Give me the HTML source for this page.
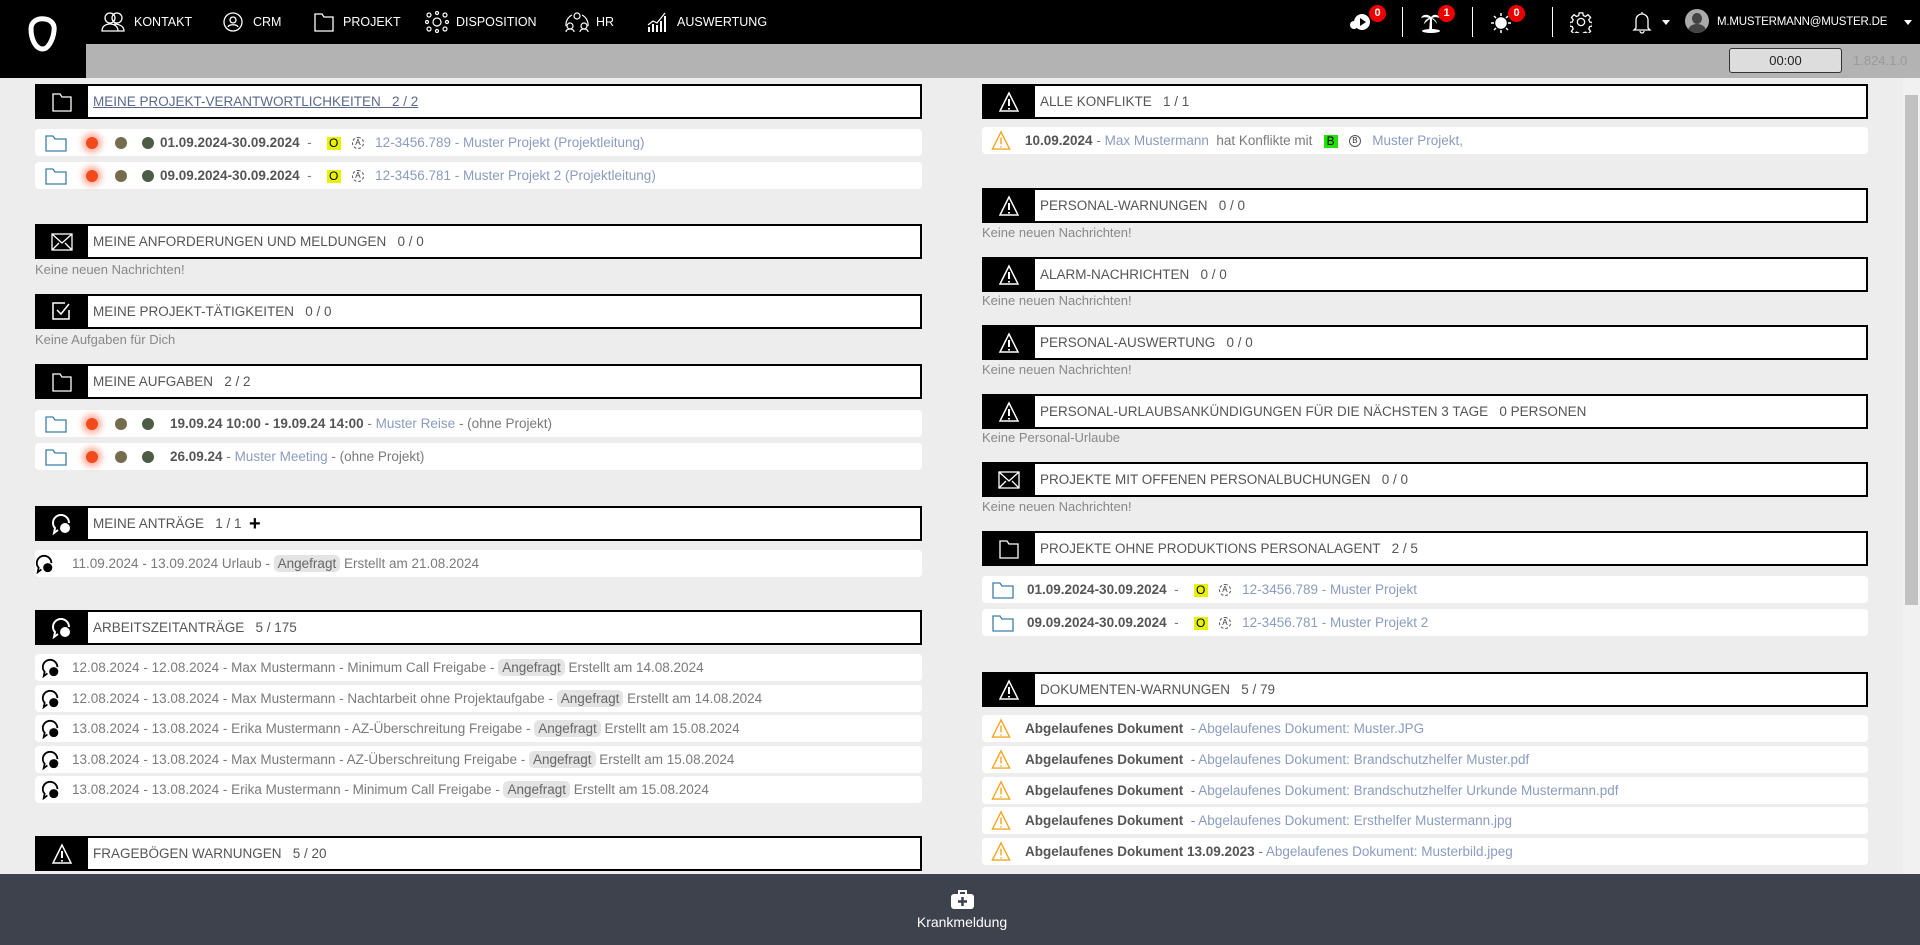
<!DOCTYPE html>
<html><head><meta charset="utf-8">
<style>
*{box-sizing:border-box;margin:0;padding:0}
body{width:1920px;height:945px;overflow:hidden;background:#ededed;font-family:"Liberation Sans",sans-serif;position:relative;color:#777}
.abs{position:absolute}
#top{left:0;top:0;width:1920px;height:44px;background:#000}
#gray{left:0;top:44px;width:1920px;height:34px;background:#b3b3b3}
#logo{left:0;top:0;width:86px;height:78px;background:#000}
.nav{position:absolute;top:0;height:44px;line-height:44px;color:#fff;font-size:12.5px}
.nav svg{position:absolute;top:11px}
.hdr{position:absolute;height:35px;border:2px solid #000;background:#fff;font-size:13.5px;color:#555;line-height:31px;padding-left:56px;white-space:nowrap}
.hdr .ib{position:absolute;left:0;top:-2px;width:51px;height:35px;background:#000}
.hdr .ib svg{position:absolute;left:14px;top:7px}
.row{position:absolute;height:27px;background:#fff;border-radius:4px;font-size:13.5px;line-height:27px;white-space:nowrap;color:#7a7a7a}
.msg{position:absolute;font-size:13px;color:#888}
.L{left:35px;width:887px}
.R{left:982px;width:886px}
b{color:#555}
.lnk{color:#8a9cc0}
.dot{position:absolute;top:8px;width:12px;height:12px;border-radius:50%}
.red{background:#f24a1c;box-shadow:0 0 6px 4px rgba(255,90,60,.45)}
.ol{background:#756c4e}
.gr{background:#4d5c45}
.yo{display:inline-block;background:#e6f200;color:#000;width:14px;height:13px;line-height:13px;text-align:center;font-size:12px;vertical-align:middle}
.ca{display:inline-block;width:12px;height:12px;border:1px dashed #555;border-radius:50%;font-size:8px;line-height:10px;text-align:center;color:#333;vertical-align:middle}
.tag{background:#e4e4e4;border-radius:5px;padding:1px 4px;color:#666}
.badge{position:absolute;top:5px;width:17px;height:17px;border-radius:50%;background:#e00;color:#fff;font-size:11px;font-weight:bold;text-align:center;line-height:17px}
.sep{position:absolute;top:7px;width:1px;height:30px;background:#fff}
</style></head><body>
<div id="top" class="abs"></div>
<div id="gray" class="abs"></div>
<div id="logo" class="abs">
<svg width="86" height="78" viewBox="0 0 86 78"><path d="M31 29c0-8 7-11 14-10 7 1 10 6 9 12-1 9-6 18-11 18-8 0-12-11-12-20z" fill="none" stroke="#fff" stroke-width="5"/></svg>
</div>
<div class="nav" style="left:100px"><svg width="28" height="22" viewBox="0 0 28 22" fill="none" stroke="#fff" stroke-width="1.3"><circle cx="10" cy="7" r="5"/><circle cx="17" cy="7" r="5"/><path d="M2 20c0-5 4-7 8-7s8 2 8 7zM14 13c5 0 10 2 10 7h-6"/></svg><span style="margin-left:34px">KONTAKT</span></div>
<div class="nav" style="left:222px"><svg width="22" height="22" viewBox="0 0 22 22" fill="none" stroke="#fff" stroke-width="1.3"><circle cx="11" cy="11" r="9"/><circle cx="11" cy="9" r="3"/><path d="M6 16c1-3 9-3 10 0"/></svg><span style="margin-left:31px">CRM</span></div>
<div class="nav" style="left:313px"><svg width="22" height="22" viewBox="0 0 22 22" fill="none" stroke="#fff" stroke-width="1.3"><path d="M2 3h7l2 3h9v14H2z"/></svg><span style="margin-left:30px">PROJEKT</span></div>
<div class="nav" style="left:425px"><svg width="24" height="22" viewBox="0 0 24 22" fill="none" stroke="#fff" stroke-width="1.2"><circle cx="12" cy="11" r="4"/><circle cx="4" cy="4" r="2"/><circle cx="20" cy="4" r="2"/><circle cx="4" cy="18" r="2"/><circle cx="20" cy="18" r="2"/><circle cx="12" cy="2" r="1.5"/><circle cx="2" cy="11" r="1.5"/><circle cx="22" cy="11" r="1.5"/><circle cx="12" cy="20" r="1.5"/></svg><span style="margin-left:31px">DISPOSITION</span></div>
<div class="nav" style="left:563px"><svg width="28" height="22" viewBox="0 0 28 22" fill="none" stroke="#fff" stroke-width="1.2"><circle cx="14" cy="5" r="3"/><circle cx="7" cy="15" r="3"/><circle cx="21" cy="15" r="3"/><path d="M3 15a11 11 0 0 1 6-11M25 15a11 11 0 0 0-6-11M3 21c0-2 2-3 4-3s4 1 4 3M17 21c0-2 2-3 4-3s4 1 4 3"/></svg><span style="margin-left:33px">HR</span></div>
<div class="nav" style="left:646px"><svg width="24" height="22" viewBox="0 0 24 22" fill="#fff"><rect x="2" y="16" width="2" height="5"/><rect x="6" y="13" width="2" height="8"/><rect x="10" y="14" width="2" height="7"/><rect x="14" y="10" width="2" height="11"/><rect x="18" y="5" width="2" height="16"/><path d="M2 14l5-4 4 2 8-10" stroke="#fff" fill="none" stroke-width="1.2"/></svg><span style="margin-left:31px">AUSWERTUNG</span></div>
<svg class="abs" style="left:1350px;top:13px" width="22" height="18" viewBox="0 0 22 18"><circle cx="12" cy="9" r="8" fill="#fff"/><circle cx="4" cy="12" r="4" fill="#fff"/><path d="M10 5l6 4-6 4z" fill="#000"/></svg>
<div class="badge" style="left:1369px">0</div>
<div class="sep" style="left:1402px"></div>
<svg class="abs" style="left:1420px;top:11px" width="22" height="22" viewBox="0 0 22 22" fill="#fff"><path d="M11 6c-4-4-9-2-10 1 3-1 6-1 8 0-3 1-5 4-5 6 2-2 4-4 6-5l-1 12h3l0-12c2 1 4 3 5 5 0-2-2-5-5-6 2-1 5-1 8 0-1-3-6-5-9-1z"/><ellipse cx="11" cy="20" rx="9" ry="2"/></svg>
<div class="badge" style="left:1438px">1</div>
<div class="sep" style="left:1472px"></div>
<svg class="abs" style="left:1490px;top:12px" width="22" height="22" viewBox="0 0 22 22" stroke="#fff" stroke-width="1.5"><circle cx="11" cy="11" r="5" fill="#fff"/><path d="M11 1v3M11 18v3M1 11h3M18 11h3M4 4l2 2M16 16l2 2M4 18l2-2M16 6l2-2"/></svg>
<div class="badge" style="left:1508px">0</div>
<div class="sep" style="left:1552px"></div>
<svg class="abs" style="left:1570px;top:11px" width="22" height="22" viewBox="0 0 24 24" fill="none" stroke="#fff" stroke-width="1.4"><circle cx="12" cy="12" r="4"/><path d="M10 2h4l.5 3 2.5 1 2.5-2 3 3-2 2.5 1 2.5 3 .5v4l-3 .5-1 2.5 2 2.5-3 3-2.5-2-2.5 1-.5 3h-4l-.5-3-2.5-1-2.5 2-3-3 2-2.5-1-2.5-3-.5v-4l3-.5 1-2.5-2-2.5 3-3 2.5 2 2.5-1z"/></svg>
<svg class="abs" style="left:1632px;top:10px" width="20" height="24" viewBox="0 0 20 24" fill="none" stroke="#fff" stroke-width="1.3"><path d="M10 2v2M4 18V10a6 6 0 0 1 12 0v8l2 2H2zM8 21a2 2 0 0 0 4 0"/></svg>
<div class="abs" style="left:1662px;top:20px;border:4px solid transparent;border-top:5px solid #fff"></div>
<div class="abs" style="left:1685px;top:9px;width:24px;height:24px;border-radius:50%;background:#aaa;overflow:hidden"><div style="position:absolute;left:7px;top:4px;width:10px;height:11px;border-radius:50%;background:#444"></div><div style="position:absolute;left:3px;top:15px;width:18px;height:14px;border-radius:50%;background:#444"></div></div>
<div class="abs" style="left:1717px;top:0;line-height:44px;color:#fff;font-size:11.5px;letter-spacing:-0.2px">M.MUSTERMANN@MUSTER.DE</div>
<div class="abs" style="left:1904px;top:20px;border:4px solid transparent;border-top:5px solid #fff"></div>
<div class="abs" style="left:1729px;top:48px;width:113px;height:25px;background:#ddd;border:1px solid #333;border-radius:3px;text-align:center;line-height:23px;font-size:13px;color:#222">00:00</div>
<div class="abs" style="left:1853px;top:48px;line-height:25px;font-size:13px;color:#999">1.824.1.0</div>
<div class="abs" style="left:1903px;top:78px;width:17px;height:796px;background:#f1f1f1"></div>
<div class="abs" style="left:1905px;top:95px;width:13px;height:510px;background:#c1c1c1"></div>

<div class="hdr L" style="top:84px"><div class="ib"><svg width="22" height="22" viewBox="0 0 22 22" fill="none" stroke="#fff" stroke-width="1.3"><path d="M2 3h7l2 3h9v14H2z"/></svg></div><span style="text-decoration:underline;color:#5a6a8a">MEINE PROJEKT-VERANTWORTLICHKEITEN &nbsp;&nbsp;2 / 2</span></div>
<div class="row L" style="top:129px"><svg class="abs" style="left:10px;top:5px" width="22" height="18" viewBox="0 0 22 18" fill="none" stroke="#3c7ea8" stroke-width="1.3"><path d="M1 2h7l2 3h11v12H1z"/></svg><div class="dot red" style="left:51px"></div><div class="dot ol" style="left:80px"></div><div class="dot gr" style="left:107px"></div><span style="position:absolute;left:125px"><b>01.09.2024-30.09.2024</b> &nbsp;- &nbsp;&nbsp;&nbsp;<span class="yo">O</span> &nbsp;&nbsp;<span class="ca">A</span> &nbsp;&nbsp;<span class="lnk">12-3456.789 - Muster Projekt (Projektleitung)</span></span></div>
<div class="row L" style="top:162px"><svg class="abs" style="left:10px;top:5px" width="22" height="18" viewBox="0 0 22 18" fill="none" stroke="#3c7ea8" stroke-width="1.3"><path d="M1 2h7l2 3h11v12H1z"/></svg><div class="dot red" style="left:51px"></div><div class="dot ol" style="left:80px"></div><div class="dot gr" style="left:107px"></div><span style="position:absolute;left:125px"><b>09.09.2024-30.09.2024</b> &nbsp;- &nbsp;&nbsp;&nbsp;<span class="yo">O</span> &nbsp;&nbsp;<span class="ca">A</span> &nbsp;&nbsp;<span class="lnk">12-3456.781 - Muster Projekt 2 (Projektleitung)</span></span></div>

<div class="hdr L" style="top:224px"><div class="ib"><svg width="22" height="18" viewBox="0 0 22 18" fill="none" stroke="#fff" stroke-width="1.3" style="top:9px"><rect x="1" y="1" width="20" height="16"/><path d="M1 1l10 9 10-9M1 17l7-7M21 17l-7-7"/></svg></div>MEINE ANFORDERUNGEN UND MELDUNGEN &nbsp;&nbsp;0 / 0</div>
<div class="msg" style="left:35px;top:262px">Keine neuen Nachrichten!</div>
<div class="hdr L" style="top:294px"><div class="ib"><svg width="20" height="20" viewBox="0 0 20 20" fill="none" stroke="#fff" stroke-width="1.5"><path d="M18 9v9H2V2h12M6 9l4 4 8-10"/></svg></div>MEINE PROJEKT-TÄTIGKEITEN &nbsp;&nbsp;0 / 0</div>
<div class="msg" style="left:35px;top:332px">Keine Aufgaben für Dich</div>
<div class="hdr L" style="top:364px"><div class="ib"><svg width="22" height="22" viewBox="0 0 22 22" fill="none" stroke="#fff" stroke-width="1.3"><path d="M2 3h7l2 3h9v14H2z"/></svg></div>MEINE AUFGABEN &nbsp;&nbsp;2 / 2</div>
<div class="row L" style="top:410px"><svg class="abs" style="left:10px;top:5px" width="22" height="18" viewBox="0 0 22 18" fill="none" stroke="#3c7ea8" stroke-width="1.3"><path d="M1 2h7l2 3h11v12H1z"/></svg><div class="dot red" style="left:51px"></div><div class="dot ol" style="left:80px"></div><div class="dot gr" style="left:107px"></div><span style="position:absolute;left:135px"><b>19.09.24 10:00 - 19.09.24 14:00</b> - <span class="lnk">Muster Reise</span> - (ohne Projekt)</span></div>
<div class="row L" style="top:443px"><svg class="abs" style="left:10px;top:5px" width="22" height="18" viewBox="0 0 22 18" fill="none" stroke="#3c7ea8" stroke-width="1.3"><path d="M1 2h7l2 3h11v12H1z"/></svg><div class="dot red" style="left:51px"></div><div class="dot ol" style="left:80px"></div><div class="dot gr" style="left:107px"></div><span style="position:absolute;left:135px"><b>26.09.24</b> - <span class="lnk">Muster Meeting</span> - (ohne Projekt)</span></div>

<div class="hdr L" style="top:506px"><div class="ib"><svg width="22" height="22" viewBox="0 0 22 22"><path d="M10 2a8 8 0 0 0-8 8c0 3 1 4 2 5l-1 5 4-3" fill="none" stroke="#fff" stroke-width="2"/><path d="M10 2a8 8 0 0 1 8 8" fill="none" stroke="#fff" stroke-width="2"/><circle cx="14" cy="15" r="5" fill="#fff"/></svg></div>MEINE ANTRÄGE &nbsp;&nbsp;1 / 1 &nbsp;<b style="color:#000;font-size:20px;vertical-align:-2px">+</b></div>
<div class="row L" style="top:550px"><svg class="abs" style="left:0;top:4px" width="20" height="20" viewBox="0 0 22 22"><path d="M10 2a8 8 0 0 0-8 8c0 3 1 4 2 5l-1 5 4-3M10 2a8 8 0 0 1 8 8" fill="none" stroke="#000" stroke-width="2"/><circle cx="14" cy="15" r="5" fill="#000"/></svg><span style="position:absolute;left:37px">11.09.2024 - 13.09.2024 Urlaub - <span class="tag">Angefragt</span> Erstellt am 21.08.2024</span></div>

<div class="hdr L" style="top:610px"><div class="ib"><svg width="22" height="22" viewBox="0 0 22 22"><path d="M10 2a8 8 0 0 0-8 8c0 3 1 4 2 5l-1 5 4-3M10 2a8 8 0 0 1 8 8" fill="none" stroke="#fff" stroke-width="2"/><circle cx="14" cy="15" r="5" fill="#fff"/></svg></div>ARBEITSZEITANTRÄGE &nbsp;&nbsp;5 / 175</div>
<div class="row L" style="top:654px"><svg class="abs" style="left:6px;top:4px" width="20" height="20" viewBox="0 0 22 22"><path d="M10 2a8 8 0 0 0-8 8c0 3 1 4 2 5l-1 5 4-3M10 2a8 8 0 0 1 8 8" fill="none" stroke="#000" stroke-width="2"/><circle cx="14" cy="15" r="5" fill="#000"/></svg><span style="position:absolute;left:37px">12.08.2024 - 12.08.2024 - Max Mustermann - Minimum Call Freigabe - <span class="tag">Angefragt</span> Erstellt am 14.08.2024</span></div>
<div class="row L" style="top:685px"><svg class="abs" style="left:6px;top:4px" width="20" height="20" viewBox="0 0 22 22"><path d="M10 2a8 8 0 0 0-8 8c0 3 1 4 2 5l-1 5 4-3M10 2a8 8 0 0 1 8 8" fill="none" stroke="#000" stroke-width="2"/><circle cx="14" cy="15" r="5" fill="#000"/></svg><span style="position:absolute;left:37px">12.08.2024 - 13.08.2024 - Max Mustermann - Nachtarbeit ohne Projektaufgabe - <span class="tag">Angefragt</span> Erstellt am 14.08.2024</span></div>
<div class="row L" style="top:715px"><svg class="abs" style="left:6px;top:4px" width="20" height="20" viewBox="0 0 22 22"><path d="M10 2a8 8 0 0 0-8 8c0 3 1 4 2 5l-1 5 4-3M10 2a8 8 0 0 1 8 8" fill="none" stroke="#000" stroke-width="2"/><circle cx="14" cy="15" r="5" fill="#000"/></svg><span style="position:absolute;left:37px">13.08.2024 - 13.08.2024 - Erika Mustermann - AZ-Überschreitung Freigabe - <span class="tag">Angefragt</span> Erstellt am 15.08.2024</span></div>
<div class="row L" style="top:746px"><svg class="abs" style="left:6px;top:4px" width="20" height="20" viewBox="0 0 22 22"><path d="M10 2a8 8 0 0 0-8 8c0 3 1 4 2 5l-1 5 4-3M10 2a8 8 0 0 1 8 8" fill="none" stroke="#000" stroke-width="2"/><circle cx="14" cy="15" r="5" fill="#000"/></svg><span style="position:absolute;left:37px">13.08.2024 - 13.08.2024 - Max Mustermann - AZ-Überschreitung Freigabe - <span class="tag">Angefragt</span> Erstellt am 15.08.2024</span></div>
<div class="row L" style="top:776px"><svg class="abs" style="left:6px;top:4px" width="20" height="20" viewBox="0 0 22 22"><path d="M10 2a8 8 0 0 0-8 8c0 3 1 4 2 5l-1 5 4-3M10 2a8 8 0 0 1 8 8" fill="none" stroke="#000" stroke-width="2"/><circle cx="14" cy="15" r="5" fill="#000"/></svg><span style="position:absolute;left:37px">13.08.2024 - 13.08.2024 - Erika Mustermann - Minimum Call Freigabe - <span class="tag">Angefragt</span> Erstellt am 15.08.2024</span></div>
<div class="hdr L" style="top:836px"><div class="ib"><svg width="22" height="22" viewBox="0 0 22 22" fill="none" stroke="#fff" stroke-width="1.5"><path d="M11 2L2 20h18z"/><path d="M11 8v7M11 17v1.5" stroke-width="2"/></svg></div>FRAGEBÖGEN WARNUNGEN &nbsp;&nbsp;5 / 20</div>

<div class="hdr R" style="top:84px"><div class="ib"><svg width="22" height="22" viewBox="0 0 22 22" fill="none" stroke="#fff" stroke-width="1.5"><path d="M11 2L2 20h18z"/><path d="M11 8v7M11 17v1.5" stroke-width="2"/></svg></div>ALLE KONFLIKTE &nbsp;&nbsp;1 / 1</div>
<div class="row R" style="top:127px"><svg class="abs" style="left:8px;top:3px" width="22" height="21" viewBox="0 0 22 22" fill="none" stroke="#f5a623" stroke-width="1.5"><path d="M11 2L2 20h18z"/><path d="M11 8v7M11 17v1.5"/></svg><span style="position:absolute;left:43px"><b>10.09.2024</b> - <span class="lnk">Max Mustermann</span> &nbsp;hat Konflikte mit &nbsp;&nbsp;<span class="yo" style="background:#22e000">B</span> &nbsp;&nbsp;<span class="ca" style="border-style:solid">B</span> &nbsp;&nbsp;<span class="lnk">Muster Projekt,</span></span></div>
<div class="hdr R" style="top:188px"><div class="ib"><svg width="22" height="22" viewBox="0 0 22 22" fill="none" stroke="#fff" stroke-width="1.5"><path d="M11 2L2 20h18z"/><path d="M11 8v7M11 17v1.5" stroke-width="2"/></svg></div>PERSONAL-WARNUNGEN &nbsp;&nbsp;0 / 0</div>
<div class="msg" style="left:982px;top:225px">Keine neuen Nachrichten!</div>
<div class="hdr R" style="top:257px"><div class="ib"><svg width="22" height="22" viewBox="0 0 22 22" fill="none" stroke="#fff" stroke-width="1.5"><path d="M11 2L2 20h18z"/><path d="M11 8v7M11 17v1.5" stroke-width="2"/></svg></div>ALARM-NACHRICHTEN &nbsp;&nbsp;0 / 0</div>
<div class="msg" style="left:982px;top:293px">Keine neuen Nachrichten!</div>
<div class="hdr R" style="top:325px"><div class="ib"><svg width="22" height="22" viewBox="0 0 22 22" fill="none" stroke="#fff" stroke-width="1.5"><path d="M11 2L2 20h18z"/><path d="M11 8v7M11 17v1.5" stroke-width="2"/></svg></div>PERSONAL-AUSWERTUNG &nbsp;&nbsp;0 / 0</div>
<div class="msg" style="left:982px;top:362px">Keine neuen Nachrichten!</div>
<div class="hdr R" style="top:394px"><div class="ib"><svg width="22" height="22" viewBox="0 0 22 22" fill="none" stroke="#fff" stroke-width="1.5"><path d="M11 2L2 20h18z"/><path d="M11 8v7M11 17v1.5" stroke-width="2"/></svg></div>PERSONAL-URLAUBSANKÜNDIGUNGEN FÜR DIE NÄCHSTEN 3 TAGE &nbsp;&nbsp;0 PERSONEN</div>
<div class="msg" style="left:982px;top:430px">Keine Personal-Urlaube</div>
<div class="hdr R" style="top:462px"><div class="ib"><svg width="22" height="18" viewBox="0 0 22 18" fill="none" stroke="#fff" stroke-width="1.3" style="top:9px"><rect x="1" y="1" width="20" height="16"/><path d="M1 1l10 9 10-9M1 17l7-7M21 17l-7-7"/></svg></div>PROJEKTE MIT OFFENEN PERSONALBUCHUNGEN &nbsp;&nbsp;0 / 0</div>
<div class="msg" style="left:982px;top:499px">Keine neuen Nachrichten!</div>
<div class="hdr R" style="top:531px"><div class="ib"><svg width="22" height="22" viewBox="0 0 22 22" fill="none" stroke="#fff" stroke-width="1.3"><path d="M2 3h7l2 3h9v14H2z"/></svg></div>PROJEKTE OHNE PRODUKTIONS PERSONALAGENT &nbsp;&nbsp;2 / 5</div>
<div class="row R" style="top:576px"><svg class="abs" style="left:10px;top:5px" width="22" height="18" viewBox="0 0 22 18" fill="none" stroke="#3c7ea8" stroke-width="1.3"><path d="M1 2h7l2 3h11v12H1z"/></svg><span style="position:absolute;left:45px"><b>01.09.2024-30.09.2024</b> &nbsp;- &nbsp;&nbsp;&nbsp;<span class="yo">O</span> &nbsp;&nbsp;<span class="ca">A</span> &nbsp;&nbsp;<span class="lnk">12-3456.789 - Muster Projekt</span></span></div>
<div class="row R" style="top:609px"><svg class="abs" style="left:10px;top:5px" width="22" height="18" viewBox="0 0 22 18" fill="none" stroke="#3c7ea8" stroke-width="1.3"><path d="M1 2h7l2 3h11v12H1z"/></svg><span style="position:absolute;left:45px"><b>09.09.2024-30.09.2024</b> &nbsp;- &nbsp;&nbsp;&nbsp;<span class="yo">O</span> &nbsp;&nbsp;<span class="ca">A</span> &nbsp;&nbsp;<span class="lnk">12-3456.781 - Muster Projekt 2</span></span></div>
<div class="hdr R" style="top:672px"><div class="ib"><svg width="22" height="22" viewBox="0 0 22 22" fill="none" stroke="#fff" stroke-width="1.5"><path d="M11 2L2 20h18z"/><path d="M11 8v7M11 17v1.5" stroke-width="2"/></svg></div>DOKUMENTEN-WARNUNGEN &nbsp;&nbsp;5 / 79</div>
<div class="row R" style="top:715px"><svg class="abs" style="left:8px;top:3px" width="22" height="21" viewBox="0 0 22 22" fill="none" stroke="#f5a623" stroke-width="1.5"><path d="M11 2L2 20h18z"/><path d="M11 8v7M11 17v1.5"/></svg><span style="position:absolute;left:43px"><b>Abgelaufenes Dokument</b> &nbsp;- <span class="lnk">Abgelaufenes Dokument: Muster.JPG</span></span></div>
<div class="row R" style="top:746px"><svg class="abs" style="left:8px;top:3px" width="22" height="21" viewBox="0 0 22 22" fill="none" stroke="#f5a623" stroke-width="1.5"><path d="M11 2L2 20h18z"/><path d="M11 8v7M11 17v1.5"/></svg><span style="position:absolute;left:43px"><b>Abgelaufenes Dokument</b> &nbsp;- <span class="lnk">Abgelaufenes Dokument: Brandschutzhelfer Muster.pdf</span></span></div>
<div class="row R" style="top:777px"><svg class="abs" style="left:8px;top:3px" width="22" height="21" viewBox="0 0 22 22" fill="none" stroke="#f5a623" stroke-width="1.5"><path d="M11 2L2 20h18z"/><path d="M11 8v7M11 17v1.5"/></svg><span style="position:absolute;left:43px"><b>Abgelaufenes Dokument</b> &nbsp;- <span class="lnk">Abgelaufenes Dokument: Brandschutzhelfer Urkunde Mustermann.pdf</span></span></div>
<div class="row R" style="top:807px"><svg class="abs" style="left:8px;top:3px" width="22" height="21" viewBox="0 0 22 22" fill="none" stroke="#f5a623" stroke-width="1.5"><path d="M11 2L2 20h18z"/><path d="M11 8v7M11 17v1.5"/></svg><span style="position:absolute;left:43px"><b>Abgelaufenes Dokument</b> &nbsp;- <span class="lnk">Abgelaufenes Dokument: Ersthelfer Mustermann.jpg</span></span></div>
<div class="row R" style="top:838px"><svg class="abs" style="left:8px;top:3px" width="22" height="21" viewBox="0 0 22 22" fill="none" stroke="#f5a623" stroke-width="1.5"><path d="M11 2L2 20h18z"/><path d="M11 8v7M11 17v1.5"/></svg><span style="position:absolute;left:43px"><b>Abgelaufenes Dokument 13.09.2023</b> - <span class="lnk">Abgelaufenes Dokument: Musterbild.jpeg</span></span></div>

<div class="abs" style="left:0;top:874px;width:1920px;height:71px;background:#3d424c"></div>
<svg class="abs" style="left:951px;top:890px" width="23" height="19" viewBox="0 0 23 19"><path d="M8 4V1h7v3" fill="none" stroke="#fff" stroke-width="2"/><rect x="0" y="4" width="23" height="15" rx="3" fill="#fff"/><path d="M11.5 7v9M7 11.5h9" stroke="#3d424c" stroke-width="2.5"/></svg>
<div class="abs" style="left:862px;top:914px;width:200px;text-align:center;color:#fff;font-size:14px">Krankmeldung</div>
</body></html>
